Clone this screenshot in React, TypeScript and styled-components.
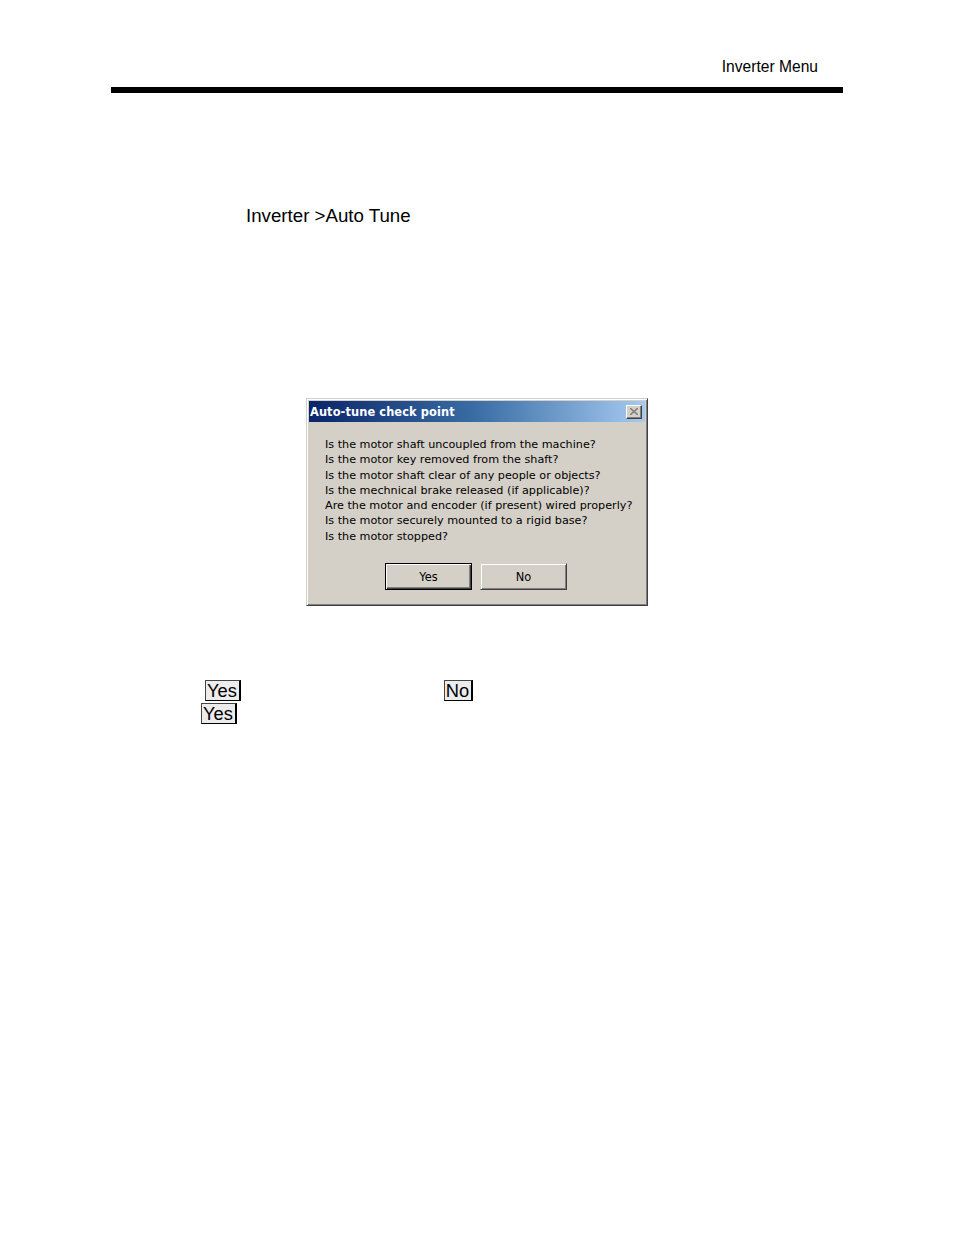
import styled, { createGlobalStyle } from 'styled-components';

const GlobalStyle = createGlobalStyle`
  html, body {
    margin: 0;
    padding: 0;
    background: #ffffff;
  }
  body {
    font-family: "Liberation Sans", Arial, sans-serif;
    color: #000;
  }
`;

const Page = styled.div`
  width: 954px;
  height: 1235px;
  position: relative;
  overflow: hidden;
`;

const Header = styled.header`
  margin: 58px 0 0 111px;
  width: 732px;
`;

const HeaderTitle = styled.div`
  text-align: right;
  padding-right: 25px;
  font-size: 15.6px;
  line-height: 18px;
`;

const Rule = styled.div`
  margin-top: 11px;
  height: 6px;
  background: #000;
`;

const MenuPath = styled.div`
  margin: 112px 0 0 246px;
  font-size: 18.7px;
  line-height: 22px;
`;

const Dialog = styled.div`
  margin: 171px 0 0 306px;
  width: 342px;
  height: 208px;
  box-sizing: border-box;
  background: #d4d0c8;
  border-top: 1px solid #d4d0c8;
  border-left: 1px solid #d4d0c8;
  border-right: 1px solid #404040;
  border-bottom: 1px solid #404040;
  box-shadow: inset 1px 1px 0 #ffffff, inset -1px -1px 0 #808080;
  padding: 2px;
  font-family: "DejaVu Sans", Verdana, sans-serif;
`;

const TitleBar = styled.div`
  height: 21px;
  display: flex;
  align-items: center;
  justify-content: space-between;
  padding: 0 3px 0 1px;
  background: linear-gradient(to right, #0a246a 0%, #3a6ea5 50%, #a6caf0 100%);
`;

const TitleText = styled.span`
  color: #ffffff;
  font-weight: bold;
  font-size: 11.4px;
  letter-spacing: 0.1px;
`;

const CloseButton = styled.div`
  width: 16px;
  height: 14px;
  box-sizing: border-box;
  background: #d4d0c8;
  border-top: 1px solid #ffffff;
  border-left: 1px solid #ffffff;
  border-right: 1px solid #404040;
  border-bottom: 1px solid #404040;
  box-shadow: inset -1px -1px 0 #808080;
  display: flex;
  align-items: center;
  justify-content: center;
`;

const Body = styled.div`
  padding: 15px 0 0 16px;
  font-size: 11.2px;
  line-height: 15.3px;
  color: #000;
`;

const Line = styled.div`
  white-space: nowrap;
`;

const ButtonRow = styled.div`
  display: flex;
  gap: 8px;
  margin: 19px 0 0 76px;
`;

const DialogButton = styled.div<{ $default?: boolean }>`
  width: 87px;
  height: 27px;
  box-sizing: border-box;
  display: flex;
  align-items: center;
  justify-content: center;
  font-size: 11.4px;
  background: #d4d0c8;
  border: 1px solid ${(p) => (p.$default ? '#000000' : '#d4d0c8')};
  box-shadow: ${(p) =>
    p.$default
      ? 'inset 1px 1px 0 #ffffff, inset -1px -1px 0 #404040, inset -2px -2px 0 #808080'
      : 'inset 1px 1px 0 #ffffff, inset -1px -1px 0 #808080'};
  border-right-color: ${(p) => (p.$default ? '#000000' : '#404040')};
  border-bottom-color: ${(p) => (p.$default ? '#000000' : '#404040')};
`;

const Notes = styled.div`
  margin-top: 74px;
  font-size: 18.3px;
`;

const NoteLine = styled.div<{ $indent: number }>`
  display: flex;
  height: 23px;
  align-items: flex-start;
  padding-left: ${(p) => p.$indent}px;
`;

const KeyBox = styled.span<{ $offset?: number }>`
  display: inline-block;
  margin-left: ${(p) => p.$offset ?? 0}px;
  background: #ececec;
  border: 1px solid #000;
  border-right-width: 2px;
  border-top-color: #444;
  border-left-color: #444;
  padding: 0 2px 0 1px;
  line-height: 19px;
`;

const questions = [
  'Is the motor shaft uncoupled from the machine?',
  'Is the motor key removed from the shaft?',
  'Is the motor shaft clear of any people or objects?',
  'Is the mechnical brake released (if applicable)?',
  'Are the motor and encoder (if present) wired properly?',
  'Is the motor securely mounted to a rigid base?',
  'Is the motor stopped?',
];

function CloseGlyph() {
  return (
    <svg width="8" height="7" viewBox="0 0 8 7">
      <path d="M0 0 L8 7 M8 0 L0 7" stroke="#808080" strokeWidth="1.6" />
    </svg>
  );
}

export default function App() {
  return (
    <Page>
      <GlobalStyle />
      <Header>
        <HeaderTitle>Inverter Menu</HeaderTitle>
        <Rule />
      </Header>
      <MenuPath>Inverter &gt;Auto Tune</MenuPath>
      <Dialog>
        <TitleBar>
          <TitleText>Auto-tune check point</TitleText>
          <CloseButton>
            <CloseGlyph />
          </CloseButton>
        </TitleBar>
        <Body>
          {questions.map((q) => (
            <Line key={q}>{q}</Line>
          ))}
        </Body>
        <ButtonRow>
          <DialogButton $default>Yes</DialogButton>
          <DialogButton>No</DialogButton>
        </ButtonRow>
      </Dialog>
      <Notes>
        <NoteLine $indent={205}>
          <KeyBox>Yes</KeyBox>
          <KeyBox $offset={203}>No</KeyBox>
        </NoteLine>
        <NoteLine $indent={201}>
          <KeyBox>Yes</KeyBox>
        </NoteLine>
      </Notes>
    </Page>
  );
}
